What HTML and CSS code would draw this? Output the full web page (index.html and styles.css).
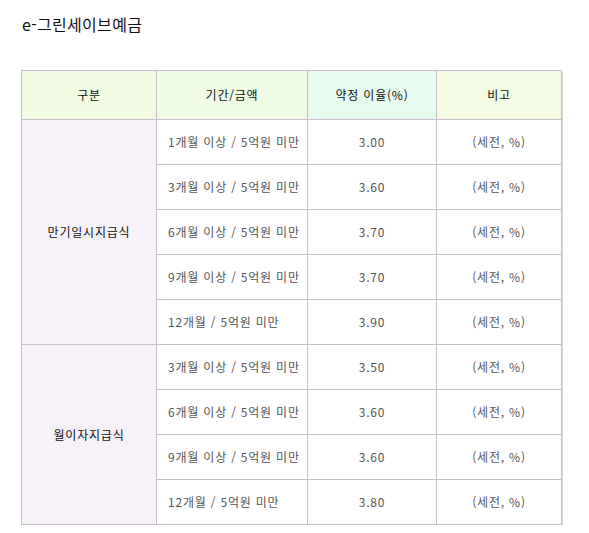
FILE: index.html
```html
<!DOCTYPE html>
<html lang="ko">
<head>
<meta charset="utf-8">
<link rel="stylesheet" href="styles.css">
</head>
<body>
<div class="page">
  <h1 class="title">e-그린세이브예금</h1>
  <table class="rates">
    <colgroup>
      <col class="c1"><col class="c2"><col class="c3"><col class="c4">
    </colgroup>
    <thead>
      <tr>
        <th class="h-a">구분</th>
        <th class="h-b">기간/금액</th>
        <th class="h-c">약정 이율(%)</th>
        <th class="h-d">비고</th>
      </tr>
    </thead>
    <tbody>
      <tr><td class="kind" rowspan="5">만기일시지급식</td><td class="term">1개월 이상 / 5억원 미만</td><td class="num">3.00</td><td class="num">(세전, %)</td></tr>
      <tr><td class="term">3개월 이상 / 5억원 미만</td><td class="num">3.60</td><td class="num">(세전, %)</td></tr>
      <tr><td class="term">6개월 이상 / 5억원 미만</td><td class="num">3.70</td><td class="num">(세전, %)</td></tr>
      <tr><td class="term">9개월 이상 / 5억원 미만</td><td class="num">3.70</td><td class="num">(세전, %)</td></tr>
      <tr><td class="term">12개월 / 5억원 미만</td><td class="num">3.90</td><td class="num">(세전, %)</td></tr>
      <tr><td class="kind" rowspan="4">월이자지급식</td><td class="term">3개월 이상 / 5억원 미만</td><td class="num">3.50</td><td class="num">(세전, %)</td></tr>
      <tr><td class="term">6개월 이상 / 5억원 미만</td><td class="num">3.60</td><td class="num">(세전, %)</td></tr>
      <tr><td class="term">9개월 이상 / 5억원 미만</td><td class="num">3.60</td><td class="num">(세전, %)</td></tr>
      <tr><td class="term">12개월 / 5억원 미만</td><td class="num">3.80</td><td class="num">(세전, %)</td></tr>
    </tbody>
  </table>
</div>
</body>
</html>
```
FILE: styles.css
```css
html, body {
  margin: 0;
  padding: 0;
  background: #ffffff;
}
body {
  font-family: "Noto Sans CJK KR", "Noto Sans", sans-serif;
  color: #222;
}
.page {
  padding: 13px 0 0 21px;
}
.title {
  margin: 0 0 0 1px;
  font-size: 16px;
  font-weight: normal;
  line-height: 22px;
  letter-spacing: 0.3px;
  color: #111;
}
.rates {
  margin-top: 35px;
  border-collapse: collapse;
  table-layout: fixed;
  width: 540px;
  box-shadow: 1px 2px 0 #d8d8d8;
  font-size: 12px;
  letter-spacing: 0.8px;
}
.c1 { width: 135px; }
.c2 { width: 151px; }
.c3 { width: 129px; }
.c4 { width: 125px; }
.rates th, .rates td {
  border: 1px solid #c9bccb;
  padding: 0;
  height: 44px;
  line-height: 14px;
}
.rates th {
  height: 48px;
  font-weight: normal;
  color: #111;
  text-align: center;
}
.h-a { background: #f1fbe2; }
.h-b { background: #effbe4; }
.h-c { background: #e8fbef; }
.h-d { background: #f3fbe2; }
.kind {
  background: #f6f2f8;
  text-align: center;
  color: #111;
}
.term {
  padding-left: 11px !important;
  color: #555;
  text-align: left;
}
.num {
  text-align: center;
  color: #555;
}
```
